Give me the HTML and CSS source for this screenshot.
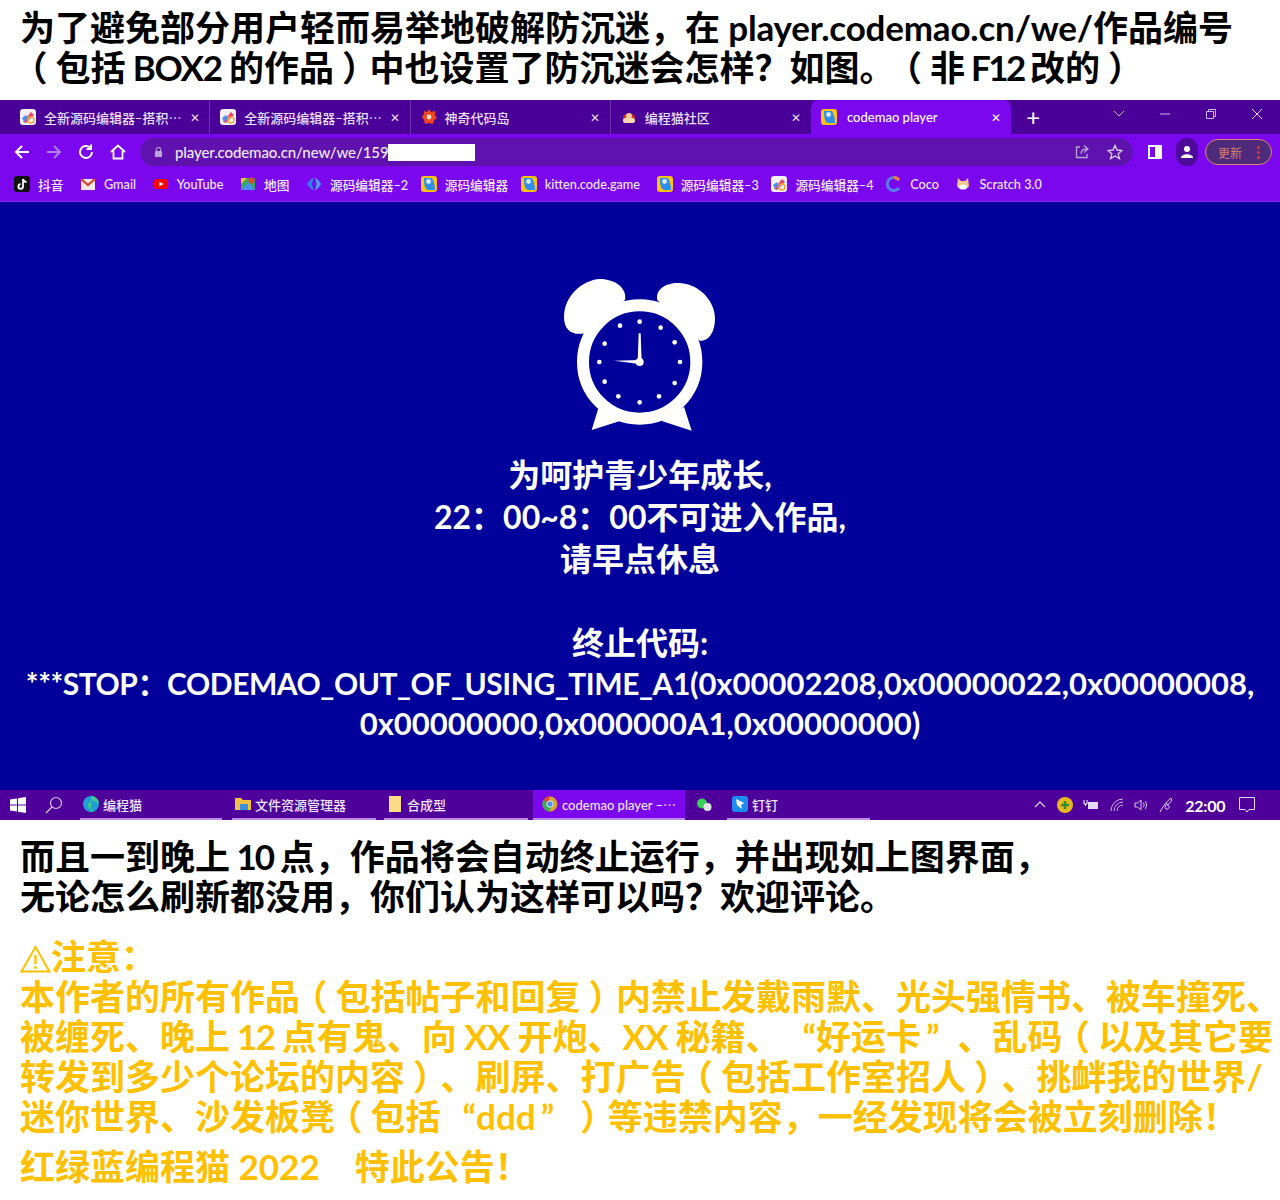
FILE: index.html
```html
<!DOCTYPE html>
<html lang="zh-CN">
<head>
    <meta charset="UTF-8">
    <meta name="viewport" content="width=device-width, initial-scale=1.0">
    <title>防沉迷</title>
    <link rel="stylesheet" href="styles.css">
</head>
<body>
    <!-- Shared favicons -->
    <svg class="sprite" aria-hidden="true">
        <symbol id="ic-source" viewBox="0 0 16 16">
            <rect width="16" height="16" rx="3" fill="#f4f1f6"/>
            <path d="M3 13 L11 3 L14 6 L6 14 Z" fill="#e8456a"/>
            <path d="M2 9 L6 6 L8 9 L4 13 Z" fill="#4f8df0"/>
            <circle cx="11" cy="11" r="3" fill="none" stroke="#f2a93a" stroke-width="1.6"/>
        </symbol>
        <symbol id="ic-kitten" viewBox="0 0 16 16">
            <rect width="16" height="16" rx="3" fill="#ffc312"/>
            <path d="M3 2 H11 C13 6 14 9 14 14 H8 C4 14 3 10 3 2 Z" fill="#2f8ff0"/>
            <circle cx="7.5" cy="5.5" r="2.4" fill="#d8ecff"/>
        </symbol>
        <symbol id="ic-coco" viewBox="0 0 16 16">
            <path d="M13 4 A6.5 6.5 0 1 0 13 12" fill="none" stroke="#5a7cf0" stroke-width="3"/>
            <path d="M8 1.5 A6.5 6.5 0 0 1 13 4" fill="none" stroke="#f07a3a" stroke-width="3"/>
        </symbol>
    </svg>

    <div class="heading">
        <p>为了避免部分用户轻而易举地破解防沉迷，在<span class="link"> player.codemao.cn/we/</span>作品编号</p>
        <p><span class="lp">（</span>包括<span class="box"> BOX2 </span>的作品<span class="rp">）</span>中也设置了防沉迷会怎样？如图。<span class="lp">（</span>非<span class="f12"> F12 </span>改的<span class="rp">）</span></p>
    </div>

    <!-- Browser screenshot -->
    <div class="screen">
        <div class="tabstrip">
            <div class="tab">
                <svg class="fav"><use href="#ic-source"/></svg>
                <span class="tab-title">全新源码编辑器–搭积⋯</span><span class="tab-x">✕</span>
            </div>
            <div class="tab">
                <svg class="fav"><use href="#ic-source"/></svg>
                <span class="tab-title">全新源码编辑器–搭积⋯</span><span class="tab-x">✕</span>
            </div>
            <div class="tab">
                <svg class="fav" viewBox="0 0 16 16"><path d="M8 0 L10 3 L14 2 L14 6 L16 9 L13 11 L12 15 L8 14 L4 15 L3 11 L1 8 L3 5 L3 2 L6 3 Z" fill="#f0451f"/><circle cx="8" cy="8" r="2.4" fill="#ffe3c8"/></svg>
                <span class="tab-title">神奇代码岛</span><span class="tab-x">✕</span>
            </div>
            <div class="tab">
                <svg class="fav" viewBox="0 0 16 16"><path d="M2 9 C2 3 14 3 14 9 Z" fill="#d8331f"/><circle cx="8" cy="7" r="3" fill="#f6c9a0"/><rect x="2" y="9" width="12" height="5" rx="2" fill="#f4d9b0"/></svg>
                <span class="tab-title">编程猫社区</span><span class="tab-x">✕</span>
            </div>
            <div class="tab tab-active">
                <svg class="fav"><use href="#ic-kitten"/></svg>
                <span class="tab-title">codemao player</span><span class="tab-x">✕</span>
            </div>
            <span class="new-tab">+</span>
            <div class="win-controls">
                <svg width="14" height="14" viewBox="0 0 14 14"><path d="M2 4 L7 9 L12 4" fill="none" stroke="#cdb6ee" stroke-width="1"/></svg>
                <svg width="14" height="14" viewBox="0 0 14 14"><path d="M2 7 H12" stroke="#cdb6ee" stroke-width="1"/></svg>
                <svg width="14" height="14" viewBox="0 0 14 14"><path d="M2.5 4.5 H9.5 V11.5 H2.5 Z M4.5 4.5 V2.5 H11.5 V9.5 H9.5" fill="none" stroke="#cdb6ee" stroke-width="1"/></svg>
                <svg width="14" height="14" viewBox="0 0 14 14"><path d="M2 2 L12 12 M12 2 L2 12" stroke="#e6d9f7" stroke-width="1"/></svg>
            </div>
        </div>

        <div class="toolbar">
            <svg class="nav-ic" viewBox="0 0 18 18"><path d="M16 9 H3 M9 3 L3 9 L9 15" fill="none" stroke="#fff" stroke-width="2"/></svg>
            <svg class="nav-ic" viewBox="0 0 18 18"><path d="M2 9 H15 M9 3 L15 9 L9 15" fill="none" stroke="#b080f0" stroke-width="2"/></svg>
            <svg class="nav-ic" viewBox="0 0 18 18"><path d="M15 9 A6 6 0 1 1 13 4.5 M14 1.5 V6 H9.5" fill="none" stroke="#fff" stroke-width="2"/></svg>
            <svg class="nav-ic" viewBox="0 0 18 18"><path d="M2 9 L9 2.5 L16 9 M4.5 8 V15.5 H13.5 V8" fill="none" stroke="#fff" stroke-width="1.8"/></svg>
            <div class="omnibox">
                <svg class="lock" viewBox="0 0 10 12"><path d="M2.5 5 V3.5 A2.5 2.5 0 0 1 7.5 3.5 V5" fill="none" stroke="#b9a3d8" stroke-width="1.2"/><rect x="1" y="5" width="8" height="6.5" rx="1" fill="#b9a3d8"/></svg>
                <span class="url">player.codemao.cn/new/we/159</span><span class="url-mask"></span>
                <svg class="omni-ic share" viewBox="0 0 16 16"><path d="M6 3 H2.5 V13.5 H13 V10 M7 10 C7 6 10 5 13 5 M10 1.5 L14 5 L10 8.5" fill="none" stroke="#b9a3d8" stroke-width="1.3"/></svg>
                <svg class="omni-ic" viewBox="0 0 16 16"><path d="M8 1.5 L10 6 L15 6.5 L11.2 9.8 L12.4 14.6 L8 12 L3.6 14.6 L4.8 9.8 L1 6.5 L6 6 Z" fill="none" stroke="#d5c6ea" stroke-width="1.4"/></svg>
            </div>
            <svg class="panel-ic" viewBox="0 0 14 14"><rect x="0" y="0" width="14" height="14" fill="#fff"/><rect x="2" y="2" width="5" height="10" fill="#7a07ee"/></svg>
            <div class="avatar">
                <svg viewBox="0 0 14 14" width="14" height="14"><circle cx="7" cy="4" r="3" fill="#fff"/><path d="M1 13 C1 8 13 8 13 13 Z" fill="#fff"/></svg>
            </div>
            <div class="update">更新<span class="dots"></span></div>
        </div>

        <div class="bookmarks">
            <span class="mark"><svg class="fav" viewBox="0 0 16 16"><rect width="16" height="16" rx="3" fill="#111"/><path d="M9 3 V10.5 A2.3 2.3 0 1 1 6.7 8.2 M9 3 C9.5 5 11 6 12.5 6" fill="none" stroke="#fff" stroke-width="1.8"/></svg>抖音</span>
            <span class="mark"><svg class="fav" viewBox="0 0 16 16"><rect x="1" y="3" width="14" height="11" fill="#f2e6e6"/><path d="M1 3 L8 9 L15 3" fill="none" stroke="#d8402f" stroke-width="2.2"/></svg>Gmail</span>
            <span class="mark"><svg class="fav" viewBox="0 0 16 16"><rect x="1" y="3" width="14" height="10" rx="3" fill="#f00"/><path d="M6.5 5.8 L10.5 8 L6.5 10.2 Z" fill="#fff"/></svg>YouTube</span>
            <span class="mark"><svg class="fav" viewBox="0 0 16 16"><path d="M1 2 H15 V14 H1 Z" fill="#38a85a"/><path d="M1 14 L9 6 L15 14 Z" fill="#4a8df0"/><path d="M1 2 H7 L1 8 Z" fill="#f5c32c"/><circle cx="11.5" cy="4.5" r="3" fill="#e5482f"/></svg>地图</span>
            <span class="mark"><svg class="fav" viewBox="0 0 16 16"><path d="M8 1 L3 5 L1 8 L3 11 L8 15 L6 8 Z" fill="#2f7fe8"/><path d="M9 1 L13 5 L15 8 L13 11 L9 15 L10.5 8 Z" fill="#4fa0f0"/></svg>源码编辑器–2</span>
            <span class="mark mark-tight"><svg class="fav"><use href="#ic-kitten"/></svg>源码编辑器</span>
            <span class="mark mark-tight"><svg class="fav"><use href="#ic-kitten"/></svg>kitten.code.game</span>
            <span class="mark"><svg class="fav"><use href="#ic-kitten"/></svg>源码编辑器–3</span>
            <span class="mark mark-tight"><svg class="fav"><use href="#ic-source"/></svg>源码编辑器–4</span>
            <span class="mark mark-tight"><svg class="fav"><use href="#ic-coco"/></svg>Coco</span>
            <span class="mark"><svg class="fav" viewBox="0 0 16 16"><path d="M3 2 L6 5 H10 L13 2 L14 10 C13 14 3 14 2 10 Z" fill="#f2c68c"/><ellipse cx="8" cy="11" rx="4" ry="2.6" fill="#fff"/></svg>Scratch 3.0</span>
        </div>

        <!-- Curfew page -->
        <div class="bluescreen">
            <svg class="clock" viewBox="0 0 600 525">
                <path d="M255 105 C262 70 225 42 180 42 C125 45 72 95 72 155 C72 195 95 212 135 205 Z" fill="#fff"/>
                <path d="M352 105 C345 70 385 50 425 55 C480 60 525 110 525 160 C525 205 505 228 480 228 Z" fill="#fff"/>
                <path d="M175 430 L155 495 L240 468 Z M432 425 L455 497 L365 468 Z" fill="#fff"/>
                <circle cx="299" cy="291" r="170" fill="#00009a" stroke="#fff" stroke-width="36"/>
                <g fill="#fff">
                    <circle cx="299" cy="170" r="7"/><circle cx="362" cy="188" r="7"/><circle cx="404" cy="232" r="7"/>
                    <circle cx="420" cy="291" r="7"/><circle cx="404" cy="354" r="7"/><circle cx="357" cy="394" r="7"/>
                    <circle cx="299" cy="412" r="7"/><circle cx="235" cy="394" r="7"/><circle cx="194" cy="350" r="7"/>
                    <circle cx="178" cy="291" r="7"/><circle cx="194" cy="236" r="7"/><circle cx="240" cy="182" r="7"/>
                    <circle cx="299" cy="291" r="12"/>
                    <path d="M296 205 H302 L305 291 H293 Z"/>
                    <path d="M222 287 L299 285 V297 Z"/>
                </g>
            </svg>
            <div class="curfew">
                <p>为呵护青少年成长,</p>
                <p>22：00~8：00不可进入作品,</p>
                <p>请早点休息</p>
                <p class="blank">&nbsp;</p>
                <p>终止代码:</p>
            </div>
            <div class="stopcode">
                <p><span class="caps">***STOP：CODEMAO_OUT_OF_USING_TIME_A1</span>(0x00002208,0x00000022,0x00000008,</p>
                <p>0x00000000,0x000000A1,0x00000000)</p>
            </div>
        </div>

        <div class="taskbar">
            <svg class="start" viewBox="0 0 16 16"><path d="M0 2.5 L7 1.5 V7.5 H0 Z M8 1.3 L16 0 V7.5 H8 Z M0 8.5 H7 V14.5 L0 13.5 Z M8 8.5 H16 V16 L8 14.7 Z" fill="#fff"/></svg>
            <svg class="search" viewBox="0 0 18 18"><circle cx="11" cy="7" r="5.5" fill="none" stroke="#d9c9ef" stroke-width="1.2"/><path d="M7 11 L1 17" stroke="#d9c9ef" stroke-width="1.2"/></svg>
            <div class="task task-edge"><svg class="fav" viewBox="0 0 16 16"><circle cx="8" cy="8" r="8" fill="#1f9fd8"/><path d="M8 0 A8 8 0 0 1 16 8 C13 4 6 4 5 9 C5 13 9 15 12 14.5 A8 8 0 0 1 8 16 Z" fill="#3fc98a"/></svg>编程猫</div>
            <div class="task task-files"><svg class="fav" viewBox="0 0 16 16"><path d="M0 2 H6 L8 4 H16 V14 H0 Z" fill="#f2c040"/><rect x="5" y="8" width="8" height="6" fill="#3a90e0"/></svg>文件资源管理器</div>
            <div class="task task-doc"><svg class="fav" viewBox="0 0 16 16"><rect x="2" y="0" width="12" height="16" fill="#f8dc86"/></svg>合成型</div>
            <div class="task task-active"><svg class="fav" viewBox="0 0 16 16"><circle cx="8" cy="8" r="7.5" fill="#d9a531"/><path d="M8 .5 A7.5 7.5 0 0 0 1.5 4 L5 10 Z" fill="#d94a35"/><path d="M1.5 4 A7.5 7.5 0 0 0 7 15.4 L10 10 Z" fill="#3fa757"/><circle cx="8" cy="8" r="3.2" fill="#4a8df0" stroke="#eee" stroke-width="1"/></svg>codemao player –⋯</div>
            <div class="task-plain"><svg class="fav" viewBox="0 0 16 16"><circle cx="6" cy="6.5" r="5" fill="#3fce5a"/><circle cx="11.5" cy="10" r="4" fill="#e3e3e3"/></svg></div>
            <div class="task task-ding"><svg class="fav" viewBox="0 0 16 16"><rect width="16" height="16" rx="3" fill="#1d8cf0"/><path d="M4 3 L12 7 L9 9 L10 13 L5 9 Z" fill="#fff"/></svg>钉钉</div>
            <div class="tray">
                <svg width="12" height="12" viewBox="0 0 12 12"><path d="M1 8 L6 3 L11 8" fill="none" stroke="#e6d9f7" stroke-width="1.1"/></svg>
                <svg class="tray-360" viewBox="0 0 16 16"><circle cx="8" cy="8" r="8" fill="#e6b81e"/><path d="M8 4 V12 M4 8 H12" stroke="#2d8f2d" stroke-width="2.4"/></svg>
                <svg width="16" height="12" viewBox="0 0 16 12"><path d="M1 1 V5 H4 V1 M2.5 5 V7" fill="none" stroke="#fff"/><rect x="5" y="3" width="10" height="7" fill="#e6d9f7"/></svg>
                <svg class="tray-wifi" width="14" height="14" viewBox="0 0 14 14"><path d="M1 13 A12 12 0 0 1 13 1 M4 13 A9 9 0 0 1 13 4 M7 13 A6 6 0 0 1 13 7" fill="none" stroke="#c9b6e6" stroke-width="1"/></svg>
                <svg width="14" height="14" viewBox="0 0 14 14"><path d="M1 5 H3.5 L7 2 V12 L3.5 9 H1 Z M9 4.5 C10.5 6 10.5 8 9 9.5 M11 3 C13 5 13 9 11 11" fill="none" stroke="#d9c9ef" stroke-width="1"/></svg>
                <svg class="tray-pen" width="16" height="16" viewBox="0 0 16 16"><path d="M1 15 C4 9 8 4 12 1 C14 4 10 7 8 8 C12 8 10 13 7 12 C5 11 7 8 8 6" fill="none" stroke="#e6d9f7" stroke-width="1"/></svg>
                <span class="time">22:00</span>
                <svg class="tray-note" width="16" height="16" viewBox="0 0 16 16"><path d="M.5 .5 H15.5 V12.5 H10 L8 15 L6 12.5 H.5 Z" fill="none" stroke="#e6d9f7" stroke-width="1"/></svg>
            </div>
        </div>
    </div>

    <div class="after">
        <p>而且一到晚上<span class="ten"> 10 </span>点，作品将会自动终止运行，并出现如上图界面，</p>
        <p>无论怎么刷新都没用，你们认为这样可以吗？欢迎评论。</p>
    </div>

    <div class="notice">
        <p><svg class="warn" viewBox="0 0 30 28"><path d="M15 2 L29 26.5 H1 Z" fill="none" stroke="#ffc000" stroke-width="2"/><path d="M15 10 V19" stroke="#ffc000" stroke-width="2.4"/><circle cx="15" cy="22.4" r="1.5" fill="#ffc000"/></svg>注意：</p>
        <p>本作者的所有作品<span class="lp">（</span>包括帖子和回复<span class="rp">）</span>内禁止发戴雨默、光头强情书、被车撞死、</p>
        <p>被缠死、晚上<span class="twelve"> 12 </span>点有鬼、向<span class="xx"> XX </span>开炮、<span class="xx">XX </span>秘籍、<span class="lq">“</span>好运卡<span class="rq">”</span>、乱码<span class="lp">（</span>以及其它要</p>
        <p>转发到多少个论坛的内容<span class="rp">）</span>、刷屏、打广告<span class="lp">（</span>包括工作室招人<span class="rp">）</span>、挑衅我的世界/</p>
        <p>迷你世界、沙发板凳<span class="lp">（</span>包括<span class="lq">“</span>ddd<span class="rq">”</span><span class="rp">）</span>等违禁内容，一经发现将会被立刻删除！</p>
        <p class="sign">红绿蓝编程猫 2022　特此公告！</p>
    </div>
</body>
</html>
```

FILE: styles.css
```css
/* General Reset and Layout */
* {
    margin: 0;
    padding: 0;
    box-sizing: border-box;
}

body {
    font-family: 'Lato', 'Noto Sans CJK SC', sans-serif;
    background-color: #fff;
    color: #000;
    width: 1280px;
    height: 1200px;
    overflow: hidden;
}

p {
    white-space: pre;
}

.sprite {
    display: none;
}

/* Brackets sit in the middle of their em box in the original font */
.lp,
.rp {
    font-feature-settings: "halt";
}

.lp {
    padding: 0 8px 0 10px;
}

.rp {
    padding: 0 10px 0 8px;
}

/* Quotes take a full em in the original */
.lq {
    padding-left: 22px;
}

.rq {
    padding: 0 18px 0 5px;
}

/* The original Latin runs a little narrower than Lato */
.link {
    letter-spacing: -0.2px;
}

.box {
    letter-spacing: -1.3px;
}

.f12 {
    letter-spacing: -2.5px;
}

.ten {
    letter-spacing: -2px;
}

.twelve {
    letter-spacing: -1.5px;
}

.xx {
    letter-spacing: -0.8px;
}

/* Text above the screenshot */
.heading {
    height: 100px;
    padding: 7px 20px 0;
    font-size: 35px;
    font-weight: 700;
    line-height: 40px;
}

/* Tabs */
.tabstrip {
    height: 34px;
    background-color: #4a0098;
    display: flex;
    align-items: center;
    padding-left: 10px;
    color: #e9dff7;
    font-size: 13px;
    font-weight: 500;
}

.fav {
    width: 16px;
    height: 16px;
    flex-shrink: 0;
}

.tab {
    width: 200.25px;
    height: 34px;
    display: flex;
    align-items: center;
    padding: 0 10px;
    gap: 8px;
    border-right: 1px solid #6d35ad;
}

.tab-title {
    flex: 1;
    white-space: nowrap;
}

.tab-x {
    font-size: 12px;
}

.tab:nth-child(4) {
    border-right: none;
}

.tab-active {
    background-color: #7a07ee;
    border-radius: 8px 8px 0 0;
    border-right: none;
    color: #fff;
    gap: 10px;
}

.new-tab {
    font-size: 24px;
    font-weight: 400;
    color: #fff;
    margin-left: 15px;
    line-height: 1;
}

.win-controls {
    margin-left: auto;
    width: 168px;
    padding: 0 16px 6px 0;
    display: flex;
    justify-content: space-between;
    align-items: center;
}

/* Address bar */
.toolbar {
    height: 36px;
    background-color: #7a07ee;
    display: flex;
    align-items: center;
    padding: 0 8px 0 13px;
}

.nav-ic {
    width: 18px;
    height: 18px;
    margin-right: 14px;
}

.omnibox {
    width: 993px;
    height: 28px;
    margin-left: -1px;
    background-color: #5f12ad;
    border-radius: 14px;
    display: flex;
    align-items: center;
    padding: 0 10px 0 14px;
    color: #f1e9fb;
    font-size: 15px;
    font-weight: 500;
}

.lock {
    width: 9px;
    height: 12px;
    margin-right: 12px;
}

.url {
    white-space: nowrap;
    letter-spacing: -0.1px;
}

.url-mask {
    width: 87px;
    height: 17px;
    background-color: #fff;
}

.omni-ic {
    width: 16px;
    height: 16px;
}

.share {
    margin-left: auto;
    margin-right: 17px;
}

.panel-ic {
    width: 14px;
    height: 14px;
    margin-left: 15px;
}

.avatar {
    width: 22px;
    height: 28px;
    margin-left: 14px;
    border-radius: 11px;
    background-color: #4e0a98;
    display: flex;
    align-items: center;
    justify-content: center;
}

.update {
    width: 67px;
    height: 26px;
    margin-left: 7px;
    border: 1px solid #d8886a;
    border-radius: 13px;
    background-color: #4f2a7a;
    color: #d8806a;
    font-size: 12px;
    display: flex;
    align-items: center;
    padding-left: 12px;
}

.dots {
    width: 3px;
    height: 3px;
    margin-left: 15px;
    background-color: #d83a3a;
    border-radius: 50%;
    box-shadow: 0 -5px 0 #d83a3a, 0 5px 0 #d83a3a;
}

/* Bookmarks */
.bookmarks {
    height: 32px;
    padding-bottom: 3px;
    background-color: #7a07ee;
    border-bottom: 1px solid #8a2cf0;
    display: flex;
    align-items: center;
    padding-left: 6px;
    color: #f1e9fb;
    font-size: 12.7px;
    font-weight: 500;
}

.mark {
    display: flex;
    align-items: center;
    gap: 8px;
    padding: 0 8.6px 0 8px;
    white-space: nowrap;
}

.mark-tight {
    margin-left: -4px;
}

/* Blue page */
.bluescreen {
    height: 588px;
    background-color: #00009a;
    color: #fff;
    text-align: center;
    padding-top: 63px;
    font-weight: 700;
}

.clock {
    display: block;
    width: 200px;
    height: 175px;
    margin: 0 auto;
}

.curfew {
    margin-top: 14px;
    font-size: 32px;
    line-height: 42px;
}

.stopcode {
    margin-top: -1px;
    font-size: 31px;
    line-height: 40px;
}

.caps {
    font-size: 30px;
    letter-spacing: -0.45px;
}

/* Windows taskbar */
.taskbar {
    height: 30px;
    background-color: #50009a;
    display: flex;
    align-items: center;
    color: #efe6fa;
    font-size: 13px;
    font-weight: 500;
}

.start {
    width: 16px;
    height: 16px;
    margin-left: 10px;
}

.search {
    width: 18px;
    height: 18px;
    margin: 0 0 0 19px;
}

.task {
    height: 30px;
    display: flex;
    align-items: center;
    gap: 4px;
    padding-left: 3px;
    border-bottom: 2px solid #b98ce8;
    white-space: nowrap;
}

.task-edge {
    width: 142px;
    margin-left: 17px;
}

.task-files {
    width: 144px;
    margin-left: 10px;
}

.task-doc {
    width: 144px;
    margin-left: 8px;
}

.task-active {
    width: 152px;
    margin-left: 5px;
    padding-left: 9px;
    background-color: #7a07ee;
}

.task-plain {
    width: 42px;
    display: flex;
    padding-left: 11px;
}

.task-ding {
    width: 143px;
    padding-left: 5px;
}

.tray {
    margin-left: auto;
    width: 246px;
    display: flex;
    align-items: center;
    justify-content: space-between;
    padding-right: 25px;
}

.tray-360 {
    width: 16px;
    height: 16px;
}

.time {
    color: #fff;
    font-size: 16px;
    font-weight: 700;
    letter-spacing: -0.2px;
    margin-right: 3px;
}

/* Text below the screenshot */
.after {
    padding: 16px 20px 0;
    font-size: 35px;
    font-weight: 700;
    line-height: 40px;
}

.notice {
    padding: 20px 20px 0;
    font-size: 35px;
    font-weight: 700;
    line-height: 40px;
    color: #ffc000;
}

.warn {
    width: 31px;
    height: 28px;
    vertical-align: -3px;
}

.sign {
    margin-top: 10px;
}
```
